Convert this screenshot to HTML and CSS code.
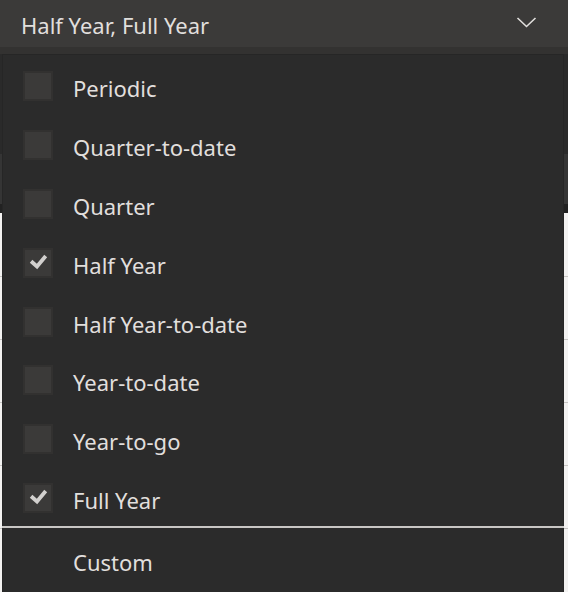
FILE: index.html
```html
<!DOCTYPE html>
<html>
<head>
<meta charset="utf-8">
<link rel="stylesheet" href="styles.css">
</head>
<body>
<div class="header">
  <span class="value">Half Year, Full Year</span>
  <svg class="chevron" width="22" height="14" viewBox="0 0 22 14"><path d="M1.5 2 L10.5 10.5 L19.5 2" fill="none" stroke="#e1dfdd" stroke-width="1.6"/></svg>
</div>
<div class="backdrop">
  <div class="dark-top">
    <div class="band band-a"></div>
    <div class="band band-b"></div>
    <div class="band band-c"></div>
  </div>
  <div class="light">
    <div class="lrow short"></div>
    <div class="lrow"></div>
    <div class="lrow"></div>
    <div class="lrow"></div>
    <div class="lrow"></div>
  </div>
</div>
<div class="menu">
  <div class="item"><span class="box"></span><span class="label">Periodic</span></div>
  <div class="item"><span class="box"></span><span class="label">Quarter-to-date</span></div>
  <div class="item"><span class="box"></span><span class="label">Quarter</span></div>
  <div class="item"><span class="box checked"><svg width="30" height="30" viewBox="0 0 30 30"><path d="M9.5 14.5 L14 18.5 L21.5 9.5" fill="none" stroke="#d2d0ce" stroke-width="3.8" stroke-linecap="square" stroke-linejoin="miter"/></svg></span><span class="label">Half Year</span></div>
  <div class="item"><span class="box"></span><span class="label">Half Year-to-date</span></div>
  <div class="item"><span class="box"></span><span class="label">Year-to-date</span></div>
  <div class="item"><span class="box"></span><span class="label">Year-to-go</span></div>
  <div class="item"><span class="box checked"><svg width="30" height="30" viewBox="0 0 30 30"><path d="M9.5 14.5 L14 18.5 L21.5 9.5" fill="none" stroke="#d2d0ce" stroke-width="3.8" stroke-linecap="square" stroke-linejoin="miter"/></svg></span><span class="label">Full Year</span></div>
  <div class="sep"></div>
  <div class="item custom"><span class="label">Custom</span></div>
</div>
</body>
</html>
```
FILE: styles.css
```css
html, body {
  margin: 0;
  padding: 0;
}
body {
  width: 568px;
  height: 592px;
  overflow: hidden;
  position: relative;
  background: #f3f2f1;
  font-family: "Noto Sans", "Open Sans", sans-serif;
}
.header {
  height: 47px;
  background: #3b3a39;
  display: flex;
  align-items: center;
  justify-content: space-between;
  padding: 0 30px 0 21px;
  color: #e1dfdd;
  font-size: 22px;
}
.value {
  position: relative;
  top: 1px;
}
.chevron {
  display: block;
  position: relative;
  top: -1px;
}
.backdrop {
  display: flex;
  flex-direction: column;
}
.dark-top {
  height: 166px;
  background: #2b2b2b;
  border-top: 7px solid #333231;
  box-sizing: border-box;
  display: flex;
  flex-direction: column;
}
.band {
  flex: none;
}
.band-a { height: 100px; background: #2a2a2a; }
.band-b { height: 50px; background: #353535; }
.band-c { height: 9px; background: #222; }
.light {
  background: #f3f2f1;
  display: flex;
  flex-direction: column;
}
.lrow {
  height: 62px;
  border-bottom: 1px solid #c8c6c4;
}
.lrow.short {
  height: 63px;
}
.menu {
  position: absolute;
  top: 54px;
  left: 2px;
  width: 562px;
  height: 560px;
  background: #2b2b2b;
  box-sizing: border-box;
  border: 1px solid #262626;
  padding-top: 4px;
  color: #e1dfdd;
  font-size: 22px;
}
.item {
  height: 58.8px;
  display: flex;
  align-items: center;
  padding-left: 20px;
}
.box {
  width: 30px;
  height: 30px;
  box-sizing: border-box;
  background: #3b3a39;
  border: 2px solid #323130;
  flex: none;
  display: flex;
  position: relative;
  top: -2px;
}
.box svg {
  display: block;
  margin: -2px;
}
.label {
  margin-left: 20px;
}
.custom .label {
  margin-left: 50px;
}
.sep {
  height: 2px;
  margin-top: -3px;
  background: #c8c6c4;
  margin-left: -1px;
  margin-right: -1px;
}
.custom {
  height: 68px;
}
```
